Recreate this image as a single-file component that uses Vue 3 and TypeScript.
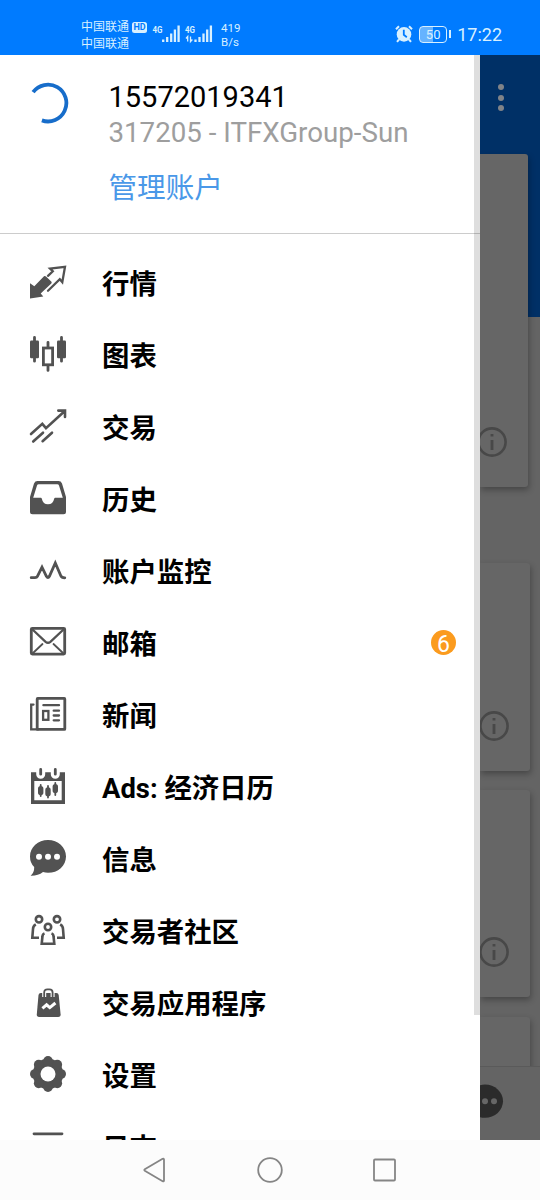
<script setup lang="ts">
interface MenuItem {
  id: string
  label: string
  badge?: number
}

const items: MenuItem[] = [
  { id: 'quotes', label: '行情' },
  { id: 'charts', label: '图表' },
  { id: 'trade', label: '交易' },
  { id: 'history', label: '历史' },
  { id: 'monitor', label: '账户监控' },
  { id: 'mail', label: '邮箱', badge: 6 },
  { id: 'news', label: '新闻' },
  { id: 'calendar', label: 'Ads: 经济日历' },
  { id: 'messages', label: '信息' },
  { id: 'community', label: '交易者社区' },
  { id: 'apps', label: '交易应用程序' },
  { id: 'settings', label: '设置' },
  { id: 'journal', label: '日志' },
]

const lobes = [0, 45, 90, 135, 180, 225, 270, 315].map((deg) => {
  const a = (deg * Math.PI) / 180
  return { x: 18 + 13.2 * Math.cos(a), y: 18 + 13.2 * Math.sin(a) }
})
</script>

<template>
  <div class="phone">
    <header class="status">
      <div class="carriers">
        <div class="carrier">中国联通<span class="hd">HD</span></div>
        <div class="carrier">中国联通</div>
      </div>
      <svg class="signals" width="62" height="22" viewBox="0 0 62 22">
        <g class="sig-text">
          <text x="0.5" y="10" textLength="10" lengthAdjust="spacingAndGlyphs">4G</text>
          <text x="33" y="10" textLength="10" lengthAdjust="spacingAndGlyphs">4G</text>
        </g>
        <g class="bars">
          <path d="M11.2 16.5V19M15.2 14V19M19.2 10.5V19M22.9 6.5V19M26.6 2.5V19" />
          <path d="M43.5 16.5V19M47.5 14V19M51.5 10.5V19M55.2 6.5V19M58.9 2.5V19" />
        </g>
        <path class="updown" d="M35.7 18.5V13.5L34 15.5M38.5 13.5V18.5L40.4 16.5" />
      </svg>
      <div class="speed"><span>419</span><span>B/s</span></div>
      <div class="right">
        <svg width="18" height="18" viewBox="0 0 18 18">
          <circle cx="9" cy="9.4" r="7.3" class="light" />
          <path class="alarm" d="M1 4.2L4 1.2M17 4.2L14 1.2M4 14.5L2 16.8M14 14.5L16 16.8" />
          <path class="hands" d="M8.8 4.8V9.8L11.8 12.2" />
        </svg>
        <div class="battery"><span>50</span></div>
        <i class="cap"></i>
        <span class="clock">17:22</span>
      </div>
    </header>

    <main class="body">
      <aside class="drawer">
        <section class="account">
          <svg class="spinner" width="42" height="42" viewBox="0 0 42 42">
            <path d="M6.1 10.2A18.4 18.4 0 1 1 14.9 38.4" />
          </svg>
          <div class="info">
            <div class="phone-no">15572019341</div>
            <div class="server">317205 - ITFXGroup-Sun</div>
            <div class="manage">管理账户</div>
          </div>
        </section>

        <nav class="menu">
          <div v-for="item in items" :key="item.id" class="item">
            <svg class="icon" width="36" height="36" viewBox="0 0 36 36">
              <template v-if="item.id === 'quotes'">
                <path class="f" d="M0 34.6V19.3L4.3 22.3L14 12.3Q15 11.6 16 12.6L21.5 17.8Q22 18.8 21.3 19.6L10.7 29.6L13.3 32.6Z" />
                <path class="s thin" d="M18 26.8L29.8 15.2L32.3 18.2L35 2.8L20 4.5L22.8 7.3L18 11.8" />
              </template>
              <template v-else-if="item.id === 'charts'">
                <rect class="f" x="0" y="4.5" width="9" height="17.8" rx="1.2" />
                <rect class="f" x="27" y="4.5" width="9" height="17.8" rx="1.2" />
                <path class="s" d="M4.5 1.5V25.2M31.5 1.5V25.2M18 6.3V11M18 30V34.4" />
                <rect class="s" x="13.4" y="12" width="9.2" height="16.8" />
              </template>
              <template v-else-if="item.id === 'trade'">
                <path class="s trend" d="M1 26L12.3 15.8L16 20.2L34.5 3.2M28.3 2.6H35V9" />
                <path class="s trend" d="M3.2 33.5L13 24.7M12.6 33.2L22 24.7" />
              </template>
              <template v-else-if="item.id === 'history'">
                <path class="f" fill-rule="evenodd" d="M7.5 1H28.5Q31 1 32 3.4L36 17V31.8Q36 34.3 33.5 34.3H2.5Q0 34.3 0 31.8V17L4 3.4Q5 1 7.5 1ZM8.7 4.3Q7.4 4.3 7 5.6L3.2 17.7H11Q11.8 18 12 19.3A6.1 6.1 0 0 0 24 19.3Q24.2 18 25 17.7H32.8L29 5.6Q28.6 4.3 27.3 4.3Z" />
              </template>
              <path v-else-if="item.id === 'monitor'" class="s" d="M1.2 25.7H5Q6.8 25.7 7.4 24.4L12 15.2L16.4 24.3Q18 26.8 19.4 24.3L25.3 11L30.8 23.8Q31.6 25.8 34.8 25.8" />
              <template v-else-if="item.id === 'mail'">
                <rect class="s" x="1.3" y="4.3" width="33.4" height="25.8" rx="1" />
                <path class="s thin" d="M2.5 5.5L15.6 17.8Q18 19.7 20.4 17.8L33.5 5.5" />
                <path class="s hair" d="M2.5 29.5L12.5 20M33.5 29.5L23.5 20" />
              </template>
              <template v-else-if="item.id === 'news'">
                <rect class="s" x="7.2" y="2.4" width="27.6" height="31" rx=".5" />
                <path class="s thin" d="M3.5 8.6H1.2V33.4H8M13.4 9.2H29M23.7 14.7H29M23.7 19.5H29M23.7 24.3H29" />
                <rect class="s thin" x="13.1" y="15" width="5.3" height="8.8" />
              </template>
              <template v-else-if="item.id === 'calendar'">
                <path class="f" fill-rule="evenodd" d="M1 4.3H6.2V6.2A4.5 4.5 0 0 0 15.2 6.2V4.3H20.8V6.2A4.5 4.5 0 0 0 29.8 6.2V4.3H35V36H1ZM4.3 13V32.3H31.7V13Z" />
                <path class="s" d="M10.7 1.4V6.2M25.3 1.4V6.2" />
                <path class="s hair" d="M10.7 17V28M18 18V29.5M25.3 15V27" />
                <path class="s fat" d="M10.7 20.6V24.4M18 22V25.8M25.3 18.6V22.6" />
              </template>
              <template v-else-if="item.id === 'messages'">
                <path class="f" d="M18 0C28 0 36 7.2 36 16.4S28 32.8 18 32.8Q15.3 32.8 13 32Q8 36 .6 35.8Q4.4 32.5 4.2 27Q0 22.8 0 16.4C0 7.2 8 0 18 0Z" />
                <circle class="w" cx="9" cy="16.7" r="3" />
                <circle class="w" cx="18" cy="16.7" r="3" />
                <circle class="w" cx="27" cy="16.7" r="3" />
              </template>
              <template v-else-if="item.id === 'community'">
                <g class="s people">
                  <circle cx="9" cy="7.3" r="3.2" />
                  <circle cx="27" cy="7.3" r="3.2" />
                  <circle cx="18" cy="15" r="3.2" />
                  <path d="M14.5 21.4Q12.4 22.2 12.4 25L11.7 31.8H24.3L23.6 25Q23.6 22.2 21.5 21.4" />
                  <path d="M5.8 12.4Q3 14 3 17L2.3 25.8H9M30.2 12.4Q33 14 33 17L33.7 25.8H27" />
                </g>
              </template>
              <template v-else-if="item.id === 'apps'">
                <path class="f" d="M10.8 8.9H26.4Q28.4 8.9 28.7 11L30.6 30.3Q30.8 33 28.2 33H9.2Q6.6 33 6.8 30.3L8.5 11Q8.8 8.9 10.8 8.9Z" />
                <path class="halo" d="M14.2 13V8.6Q14.2 5.3 17.4 5.3H19.4Q22.6 5.3 22.6 8.6V13" />
                <path class="s hair" d="M14.2 12.5V8.6Q14.2 5.3 17.4 5.3H19.4Q22.6 5.3 22.6 8.6V12.5" />
                <path class="zig" d="M12.4 24.4L16.6 20.8L19.8 23.6L25.4 19" />
              </template>
              <template v-else-if="item.id === 'settings'">
                <circle class="f" cx="18" cy="18" r="15.3" />
                <circle v-for="(l, i) in lobes" :key="i" class="f" :cx="l.x" :cy="l.y" r="4.8" />
                <circle class="w" cx="18" cy="18" r="7.5" />
              </template>
              <path v-else class="s" d="M4 5.8H32M4 15H32M4 24H32" />
            </svg>
            <span class="label">{{ item.label }}</span>
            <span v-if="item.badge" class="badge">{{ item.badge }}</span>
          </div>
        </nav>
        <i class="scrollbar"></i>
      </aside>

      <section class="backdrop">
        <div class="dots"><i></i><i></i><i></i></div>
        <div class="card first">
          <svg class="tip" width="30" height="30" viewBox="0 0 30 30"><circle cx="15" cy="15" r="13.6" /><path d="M15 7V9.6M15 13V23" /></svg>
        </div>
        <div class="card second">
          <svg class="tip" width="30" height="30" viewBox="0 0 30 30"><circle cx="15" cy="15" r="13.6" /><path d="M15 7V9.6M15 13V23" /></svg>
        </div>
        <div class="card third">
          <svg class="tip" width="30" height="30" viewBox="0 0 30 30"><circle cx="15" cy="15" r="13.6" /><path d="M15 7V9.6M15 13V23" /></svg>
        </div>
        <div class="card fourth"></div>
        <div class="tabbar">
          <svg width="60" height="36" viewBox="0 0 60 36">
            <ellipse cx="5" cy="18.2" rx="18" ry="16.6" fill="#2b2b2b" />
            <circle cx="5" cy="18.2" r="3" fill="#666" />
            <circle cx="14" cy="18.2" r="3" fill="#666" />
          </svg>
        </div>
      </section>
    </main>

    <footer class="sysnav">
      <svg width="540" height="60" viewBox="0 0 540 60">
        <path d="M144.8 29.3Q143.8 30 144.8 30.7L162.6 41.2Q164 41.8 164 40.4V19.6Q164 18.2 162.6 18.8Z" />
        <circle cx="270" cy="30" r="11.8" />
        <rect x="374" y="19.5" width="21" height="21" rx="1" />
      </svg>
    </footer>
  </div>
</template>

<style>
body {
  margin: 0;
}
</style>

<style scoped>
.phone {
  width: 540px;
  height: 1200px;
  display: flex;
  flex-direction: column;
  overflow: hidden;
  background: #fff;
  font-family: Roboto, "Noto Sans CJK SC", sans-serif;
}
.status {
  box-sizing: border-box;
  height: 55px;
  flex: none;
  display: flex;
  background: #007bff;
  color: #d8f0ff;
  padding-left: 81px;
}
.carriers {
  padding-top: 19px;
  width: 71px;
}
.carrier {
  display: flex;
  align-items: center;
  height: 17px;
  font-size: 12px;
  line-height: 17px;
  white-space: nowrap;
}
.hd {
  margin-left: 3px;
  width: 15px;
  height: 11px;
  border-radius: 2.5px;
  background: #d8f0ff;
  color: #007bff;
  font-size: 9px;
  font-weight: 700;
  line-height: 11px;
  text-align: center;
}
.signals {
  margin-top: 23px;
}
.sig-text {
  fill: #d8f0ff;
  font-size: 9px;
  font-weight: 700;
}
.bars {
  stroke: #d8f0ff;
  stroke-width: 2.3;
}
.updown {
  fill: none;
  stroke: #d8f0ff;
  stroke-width: 1.3;
}
.speed {
  display: flex;
  flex-direction: column;
  padding-top: 21px;
  margin-left: 7px;
  font-size: 11.5px;
  line-height: 14px;
}
.right {
  display: flex;
  align-items: center;
  height: 20px;
  margin: 24px 0 0 auto;
  padding-right: 38px;
}
.light {
  fill: #d8f0ff;
}
.alarm {
  stroke: #d8f0ff;
  stroke-width: 2;
}
.hands {
  fill: none;
  stroke: #007bff;
  stroke-width: 1.8;
}
.battery {
  box-sizing: border-box;
  width: 28px;
  height: 17px;
  margin-left: 6px;
  border: 1.5px solid #d8f0ff;
  border-radius: 4px;
  background: linear-gradient(90deg, #66b3ff 50%, #007bff 50%);
  font-size: 13px;
  line-height: 15px;
  text-align: center;
}
.cap {
  width: 2px;
  height: 8px;
  margin-left: 2px;
  background: #d8f0ff;
}
.clock {
  margin-left: 6px;
  padding-top: 2px;
  font-size: 18px;
  line-height: 20px;
}
.body {
  height: 1085px;
  flex: none;
  display: flex;
  overflow: hidden;
}
.drawer {
  position: relative;
  width: 480px;
  flex: none;
  height: 1085px;
  overflow: hidden;
  background: #fff;
}
.account {
  box-sizing: border-box;
  height: 179px;
  display: flex;
  padding: 27px 0 0 27px;
  border-bottom: 1.5px solid #ccc;
}
.spinner path {
  fill: none;
  stroke: #176dca;
  stroke-width: 3.8;
}
.info {
  margin-left: 39.5px;
  margin-top: -3px;
  white-space: nowrap;
}
.phone-no {
  font-size: 29px;
  line-height: 36px;
  color: #000;
}
.server {
  font-size: 27.7px;
  line-height: 36px;
  color: #9e9e9e;
}
.manage {
  margin-top: 18px;
  font-size: 28.6px;
  line-height: 38px;
  color: #4a98e8;
}
.menu {
  padding-top: 12px;
}
.item {
  height: 72px;
  display: flex;
  align-items: center;
  padding: 0 24px 0 30px;
}
.icon {
  flex: none;
  overflow: visible;
}
.label {
  margin-left: 36px;
  padding-top: 6px;
  font-size: 27.4px;
  font-weight: 700;
  line-height: 36px;
  color: #000;
  white-space: nowrap;
}
.badge {
  width: 25px;
  height: 25px;
  margin-left: auto;
  border-radius: 50%;
  background: #fb9b1e;
  color: #fff;
  font-size: 23px;
  line-height: 30px;
  text-align: center;
}
.scrollbar {
  position: absolute;
  right: 0;
  top: 0;
  width: 6px;
  height: 960px;
  background: rgba(0, 0, 0, 0.13);
}
.f {
  fill: #525252;
}
.w {
  fill: #fff;
}
.s {
  fill: none;
  stroke: #525252;
  stroke-width: 2.8;
  stroke-linecap: round;
}
.s.thin {
  stroke-width: 2.3;
}
.s.hair {
  stroke-width: 1.8;
}
.s.trend {
  stroke-width: 2.6;
}
.s.fat {
  stroke-width: 5.4;
}
.s.people {
  stroke-width: 2.6;
  stroke-linecap: butt;
}
.halo {
  fill: none;
  stroke: #fff;
  stroke-width: 4;
}
.zig {
  fill: none;
  stroke: #fff;
  stroke-width: 3;
}
.backdrop {
  box-sizing: border-box;
  width: 60px;
  height: 1085px;
  display: flex;
  flex-direction: column;
  overflow: hidden;
  background: linear-gradient(180deg, #003066 262px, #646464 262px);
}
.dots {
  box-sizing: border-box;
  height: 99px;
  flex: none;
  display: flex;
  flex-direction: column;
  gap: 4.5px;
  padding: 29px 0 0 18px;
}
.dots i {
  width: 6px;
  height: 6px;
  border-radius: 50%;
  background: #808388;
}
.card {
  box-sizing: border-box;
  flex: none;
  width: 50px;
  display: flex;
  align-items: flex-end;
  border-radius: 0 3px 3px 0;
  background: #666;
  box-shadow: 1px 3px 6px rgba(0, 0, 0, 0.3);
}
.first {
  width: 48px;
  height: 333px;
  padding-bottom: 30px;
}
.first .tip {
  margin-left: -3px;
}
.second {
  height: 208px;
  margin-top: 76px;
  padding-bottom: 30px;
}
.third {
  height: 207px;
  margin-top: 19px;
  padding-bottom: 30px;
}
.fourth {
  height: 60px;
  margin-top: 20px;
}
.tip {
  flex: none;
  margin-left: -1.5px;
}
.tip circle {
  fill: none;
  stroke: #484848;
  stroke-width: 2.6;
}
.tip path {
  stroke: #484848;
  stroke-width: 2.8;
}
.tabbar {
  position: relative;
  box-sizing: border-box;
  height: 74px;
  flex: none;
  margin-top: -11px;
  padding-top: 16px;
  border-top: 1px solid #5a5a5a;
  background: #646464;
}
.sysnav {
  height: 60px;
  flex: none;
  background: #fcfcfc;
}
.sysnav svg {
  display: block;
  fill: none;
  stroke: #858585;
  stroke-width: 1.8;
}
</style>
